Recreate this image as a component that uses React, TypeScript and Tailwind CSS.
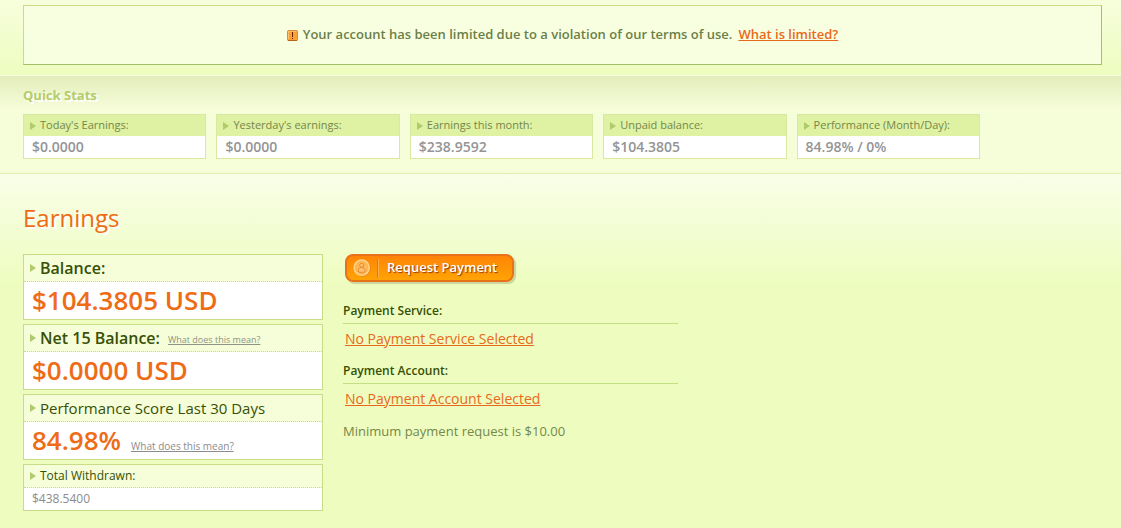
import type { ReactNode } from 'react'

interface Stat {
    label: string
    value: string
}

const QUICK_STATS: Stat[] = [
    { label: "Today's Earnings:", value: '$0.0000' },
    { label: "Yesterday's earnings:", value: '$0.0000' },
    { label: 'Earnings this month:', value: '$238.9592' },
    { label: 'Unpaid balance:', value: '$104.3805' },
    { label: 'Performance (Month/Day):', value: '84.98% / 0%' },
]

function Arrow() {
    return (
        <svg className="w-[6px] h-[8px] shrink-0" viewBox="0 0 6 8" aria-hidden="true">
            <path d="M0 0L6 4L0 8z" fill="#b1ca6c" />
        </svg>
    )
}

function WarningIcon() {
    return (
        <svg className="w-[11px] h-[11px] shrink-0" viewBox="0 0 11 11" aria-hidden="true">
            <rect x="0.5" y="0.5" width="10" height="10" rx="1" fill="#ff9f38" stroke="#d88a3c" />
            <path d="M1.5 9V1.5H9" fill="none" stroke="#ffc069" />
            <path d="M1 10.5H10" stroke="#b5651e" />
            <path d="M5 2h1v5H5zM5 8h1v1H5z" fill="#5e2500" />
        </svg>
    )
}

function CoinIcon() {
    return (
        <svg className="w-[18px] h-[18px] shrink-0" viewBox="0 0 18 18" aria-hidden="true">
            <circle cx="9.5" cy="9.5" r="8.2" fill="#d96a05" opacity="0.5" />
            <circle cx="8.7" cy="8.7" r="8.4" fill="#ffd080" />
            <circle cx="8.7" cy="8.7" r="6.2" fill="#ffb957" stroke="#f9a343" strokeWidth="0.7" />
            <circle cx="8.7" cy="6.2" r="2" fill="#ffc370" stroke="#e07b26" strokeWidth="0.8" />
            <path d="M5.2 12.3C5.2 9.6 6.6 8.6 8.7 8.6S12.2 9.6 12.2 12.3L10.5 13.3H6.900z" fill="#ffc370" stroke="#e07b26" strokeWidth="0.8" />
        </svg>
    )
}

function StatBox({ label, value }: Stat) {
    return (
        <div className="border border-[#d9e9a0] bg-white">
            <dt className="flex items-center gap-1 h-[21px] pl-[6px] bg-[#dff1a3] text-[11px] text-[#75874a] whitespace-nowrap">
                <Arrow />
                {label}
            </dt>
            <dd className="h-[22px] pl-2 text-[14px] leading-[22px] font-semibold text-[#949494]">{value}</dd>
        </div>
    )
}

interface CardProps {
    title: ReactNode
    children: ReactNode
    small?: boolean
}

function Card({ title, children, small }: CardProps) {
    return (
        <section className="border border-[#c9dc88] bg-white">
            <div
                className={`flex items-center gap-1 pl-[6px] border-b border-dotted border-[#c9dc88] bg-[#f5fdd9] text-[#385005] ${
                    small ? 'h-[23px] text-[12px]' : 'h-[27px] text-[15px]'
                }`}
            >
                <Arrow />
                {title}
            </div>
            <div className={`flex items-center pl-2 ${small ? 'h-[22px]' : 'h-[37px]'}`}>{children}</div>
        </section>
    )
}

function PaymentField({ label, link }: { label: string; link: string }) {
    return (
        <div className="mb-[9px]">
            <h3 className="h-[26px] border-b border-[#c4de86] text-[12px] leading-[26px] font-semibold text-[#385005]">{label}</h3>
            <a href="#" className="block mt-[5px] pl-[2px] text-[14px] leading-5 text-[#e8691b] underline">{link}</a>
        </div>
    )
}

export default function App() {
    return (
        <div className="min-h-screen bg-[#eefdbf] font-['Open_Sans','Trebuchet_MS',sans-serif]">
            <div className="pt-[5px] pb-[10px] pl-[23px] pr-[19px] bg-linear-to-b from-[#f7fedc] to-[#eefdbf]">
                <div className="flex items-center justify-center gap-[5px] h-[60px] border border-t-[#c9dc88] border-l-[#c9dc88] border-r-[#a8bd6e] border-b-[#a3bf69] bg-[#f8ffe1] text-[13px] font-semibold text-[#6c7f48]">
                    <WarningIcon />
                    <p>
                        Your account has been limited due to a violation of our terms of use.
                        <a href="#" className="ml-[6px] text-[#e8691b] underline">What is limited?</a>
                    </p>
                </div>
            </div>

            <section className="border-t border-t-[#f8ffe1] border-b border-b-[#e1eeae] px-[23px] pt-[9px] pb-[14px] bg-[#f6fdd9] bg-linear-to-b from-[#e4eebc] to-[#f6fdd9] to-[34px]">
                <h2 className="text-[13px] leading-5 font-bold text-[#b4cc6c] [text-shadow:2px_2px_1px_#ffffff]">Quick Stats</h2>
                <dl className="grid grid-cols-5 gap-[10px] mt-[9px] max-w-[957px]">
                    {QUICK_STATS.map((stat) => (
                        <StatBox key={stat.label} {...stat} />
                    ))}
                </dl>
            </section>

            <main className="px-[23px] pt-6 pb-4 bg-linear-to-b from-[#f9fee8] to-[#eefdbf] to-[110px]">
                <h1 className="text-[24px] leading-10 text-[#ee6c15] [text-shadow:2px_2px_1px_#ffffff]">Earnings</h1>

                <div className="flex items-start gap-5 mt-4">
                    <div className="w-[300px] flex flex-col gap-1">
                        <Card title={<h2 className="text-[16px] font-semibold">Balance:</h2>}>
                            <span className="text-[26px] font-semibold text-[#ee6c15]">$104.3805 USD</span>
                        </Card>
                        <Card
                            title={
                                <>
                                    <h2 className="text-[16px] font-semibold">Net 15 Balance:</h2>
                                    <a href="#" className="ml-1 mt-1 text-[9px] text-[#8f9582] underline">What does this mean?</a>
                                </>
                            }
                        >
                            <span className="text-[26px] font-semibold text-[#ee6c15]">$0.0000 USD</span>
                        </Card>
                        <Card title={<h2>Performance Score Last 30 Days</h2>}>
                            <span className="text-[26px] font-semibold text-[#ee6c15]">84.98%</span>
                            <a href="#" className="ml-[10px] mt-3 text-[10px] text-[#8c8c8c] underline">What does this mean?</a>
                        </Card>
                        <Card small title={<h2>Total Withdrawn:</h2>}>
                            <span className="text-[12px] font-medium text-[#8c8c8c]">$438.5400</span>
                        </Card>
                    </div>

                    <div className="flex-1 max-w-[335px]">
                        <button
                            type="button"
                            className="flex items-center w-[169px] h-7 ml-[2px] mb-4 pl-[6px] rounded-lg border-2 border-[#e8711c] bg-linear-to-b from-[#ff8406] to-[#ffa305] shadow-[2px_2px_1px_#c9d59b]"
                        >
                            <CoinIcon />
                            <span className="w-[2px] h-[19px] ml-[6px] border-l border-r border-l-[#e87508] border-r-[#ffb04a]" />
                            <span className="ml-2 pb-[2px] text-[13px] leading-5 font-semibold text-white whitespace-nowrap [text-shadow:1px_1px_1px_#8f3c00]">
                                Request Payment
                            </span>
                        </button>
                        <PaymentField label="Payment Service:" link="No Payment Service Selected" />
                        <PaymentField label="Payment Account:" link="No Payment Account Selected" />
                        <p className="mt-3 text-[13px] leading-5 text-[#75874a]">Minimum payment request is $10.00</p>
                    </div>
                </div>
            </main>
        </div>
    )
}
